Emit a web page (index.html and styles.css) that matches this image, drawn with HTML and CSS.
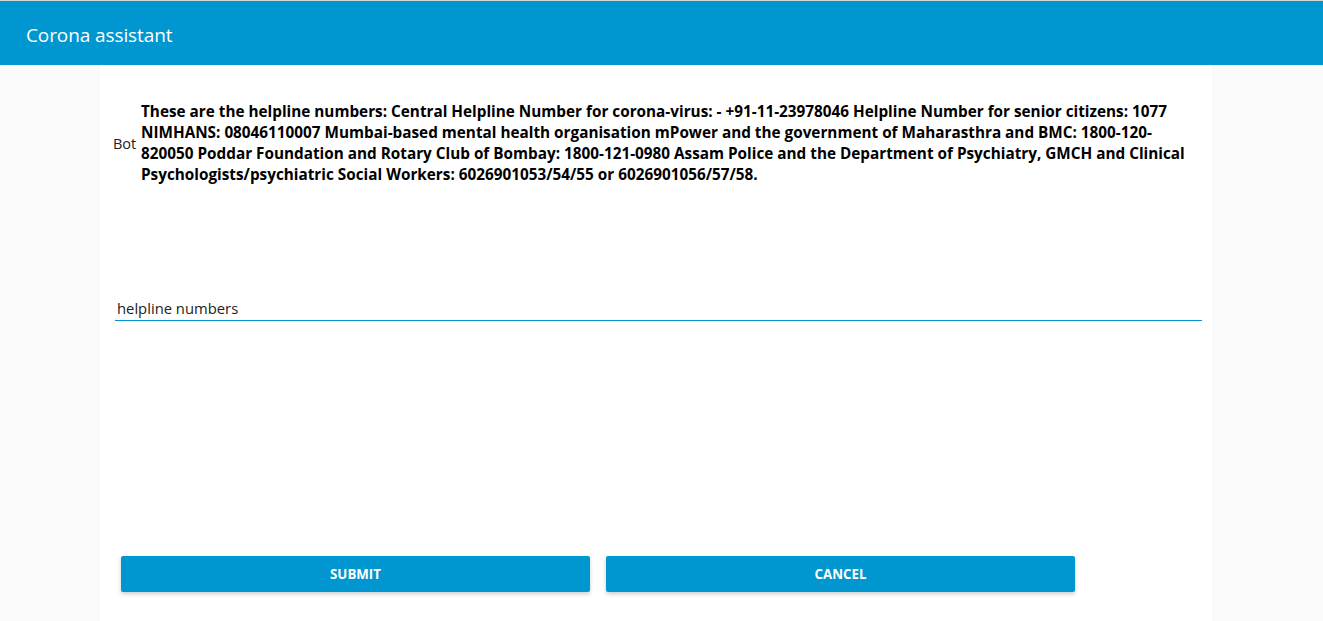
FILE: index.html
```html
<!DOCTYPE html>
<html>
<head>
<meta charset="utf-8">
<link rel="stylesheet" href="styles.css">
</head>
<body>
<header class="topbar"><span class="title">Corona assistant</span></header>
<div class="page">
  <main class="panel">
    <div class="chat">
      <div class="msg-row">
        <span class="sender">Bot</span>
        <p class="msg">These are the helpline numbers: Central Helpline Number for corona-virus: - +91-11-23978046 Helpline Number for senior citizens: 1077 NIMHANS: 08046110007 Mumbai-based mental health organisation mPower and the government of Maharasthra and BMC: 1800-120-820050 Poddar Foundation and Rotary Club of Bombay: 1800-121-0980 Assam Police and the Department of Psychiatry, GMCH and Clinical Psychologists/psychiatric Social Workers: 6026901053/54/55 or 6026901056/57/58.</p>
      </div>
    </div>
    <div class="field">
      <input class="query" type="text" value="helpline numbers">
    </div>
    <div class="actions">
      <button class="btn">Submit</button>
      <button class="btn">Cancel</button>
    </div>
  </main>
</div>
</body>
</html>
```
FILE: styles.css
```css
html, body {
  margin: 0;
  padding: 0;
}
body {
  font-family: "Open Sans", "Noto Sans", sans-serif;
  background: #fafafa;
  border-top: 1px solid #d6d6d6;
  height: 620px;
  overflow: hidden;
}
.topbar {
  height: 64px;
  box-sizing: border-box;
  background: #0096cf;
  display: flex;
  align-items: center;
  padding: 3px 0 0 26px;
}
.title {
  color: #fff;
  font-size: 19px;
  letter-spacing: -0.1px;
}
.page {
  padding-left: 100px;
}
.panel {
  width: 1112px;
  height: 556px;
  background: #fff;
  display: flex;
  flex-direction: column;
}
.chat {
  padding: 36px 12px 0 13px;
  height: 195px;
}
.msg-row {
  display: flex;
  align-items: center;
  gap: 4px;
}
.sender {
  font-size: 14.5px;
  color: #222;
  width: 24px;
  flex: none;
}
.msg {
  margin: 0;
  font-size: 15.3px;
  font-weight: bold;
  line-height: 21px;
  color: #000;
}
.field {
  padding: 0 10px 0 15px;
}
.query {
  width: 100%;
  box-sizing: border-box;
  border: none;
  border-bottom: 1px solid #0096cf;
  outline: none;
  font-family: inherit;
  font-size: 14.8px;
  color: #222;
  padding: 2px 2px 3px 2px;
  height: 25px;
}
.actions {
  margin-top: auto;
  padding: 0 0 29px 21px;
  display: flex;
  gap: 16px;
}
.btn {
  width: 469px;
  height: 36px;
  border: none;
  border-radius: 2px;
  background: #0096cf;
  color: #fff;
  font-family: inherit;
  font-weight: bold;
  font-size: 13.3px;
  text-transform: uppercase;
  box-shadow: 0 2px 4px rgba(0,0,0,0.2);
  cursor: pointer;
}
```
